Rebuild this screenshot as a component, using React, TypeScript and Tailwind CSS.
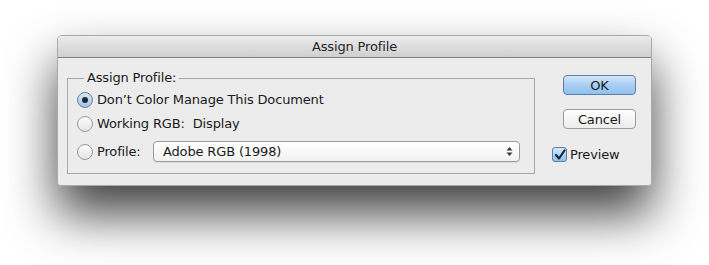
import React from "react";

const font = { fontFamily: '"Lucida Grande", "DejaVu Sans", "Liberation Sans", sans-serif' };

function Radio({ checked }: { checked?: boolean }) {
  return (
    <span
      className={
        "inline-flex h-[16px] w-[16px] shrink-0 items-center justify-center rounded-full border " +
        (checked
          ? "border-[#6b7f99] bg-gradient-to-b from-[#dbe9f7] to-[#9fc3e8]"
          : "border-[#9a9a9a] bg-gradient-to-b from-[#fdfdfd] to-[#e4e4e4]")
      }
    >
      {checked && <span className="h-[6px] w-[6px] rounded-full bg-[#1e2a38]" />}
    </span>
  );
}

export default function App() {
  return (
    <div className="h-[265px] w-[709px] bg-white pl-[57px] pt-[35px] tracking-[-0.15px]" style={font}>
      <div className="flex h-[151px] w-[595px] flex-col overflow-hidden rounded-t-[5px] rounded-b-[3px] border border-[#a9a9a9] bg-[#ececec] shadow-[0_28px_50px_rgba(0,0,0,0.75)]">
        <div className="flex h-[22px] shrink-0 items-center justify-center border-b border-[#7f7f7f] bg-gradient-to-b from-[#ececec] to-[#cfcfcf] text-[13px] text-[#262626]">
          Assign Profile
        </div>
        <div className="flex flex-1 pl-[9px] pt-[12px]">
          <fieldset className="h-[104px] w-[468px] border border-[#a8a8a8] pl-[9px] text-[13px] text-[#1a1a1a]">
            <legend className="ml-[7px] px-[3px] leading-[16px]">Assign Profile:</legend>
            <div className="mt-[6px] flex flex-col">
              <label className="flex h-[16px] items-center gap-[4px]">
                <Radio checked />
                <span>Don’t Color Manage This Document</span>
              </label>
              <label className="mt-[8px] flex h-[16px] items-center gap-[4px]">
                <Radio />
                <span>Working RGB:&nbsp; Display</span>
              </label>
              <div className="mt-[9px] flex items-center">
                <label className="flex h-[16px] w-[76px] items-center gap-[4px]">
                  <Radio />
                  <span>Profile:</span>
                </label>
                <div className="flex h-[21px] w-[367px] items-center justify-between rounded-[4px] border border-[#9c9c9c] bg-gradient-to-b from-[#ffffff] to-[#f1f1f1] pl-[9px] pr-[6px] shadow-[0_1px_0_rgba(0,0,0,0.08)]">
                  <span>Adobe RGB (1998)</span>
                  <svg width="7" height="11" viewBox="0 0 7 11">
                    <path d="M0.5 4.5 L3.5 1 L6.5 4.5 Z" fill="#3a3a3a" />
                    <path d="M0.5 6.5 L3.5 10 L6.5 6.5 Z" fill="#3a3a3a" />
                  </svg>
                </div>
              </div>
            </div>
          </fieldset>
          <div className="ml-[28px] flex flex-col pt-[5px] text-[13px] text-[#1a1a1a]">
            <button className="flex h-[20px] w-[73px] items-center justify-center rounded-[4px] border border-[#5f7ea6] bg-gradient-to-b from-[#d4e7fa] via-[#a9cff2] to-[#8ec2ef] leading-none">
              OK
            </button>
            <button className="mt-[14px] flex h-[20px] w-[73px] items-center justify-center rounded-[4px] border border-[#9b9b9b] bg-gradient-to-b from-[#ffffff] to-[#ececec] leading-none">
              Cancel
            </button>
            <label className="-ml-[11px] mt-[16px] flex items-center gap-[3px]">
              <span className="flex h-[15px] w-[15px] items-center justify-center rounded-[3px] border border-[#5f7ea6] bg-gradient-to-b from-[#d4e7fa] to-[#8ec2ef]">
                <svg width="12" height="12" viewBox="0 0 12 12">
                  <path d="M2 6 L5 9.5 L10.5 1.5" fill="none" stroke="#1c2633" strokeWidth="2.2" strokeLinecap="round" strokeLinejoin="round" />
                </svg>
              </span>
              <span>Preview</span>
            </label>
          </div>
        </div>
      </div>
    </div>
  );
}
